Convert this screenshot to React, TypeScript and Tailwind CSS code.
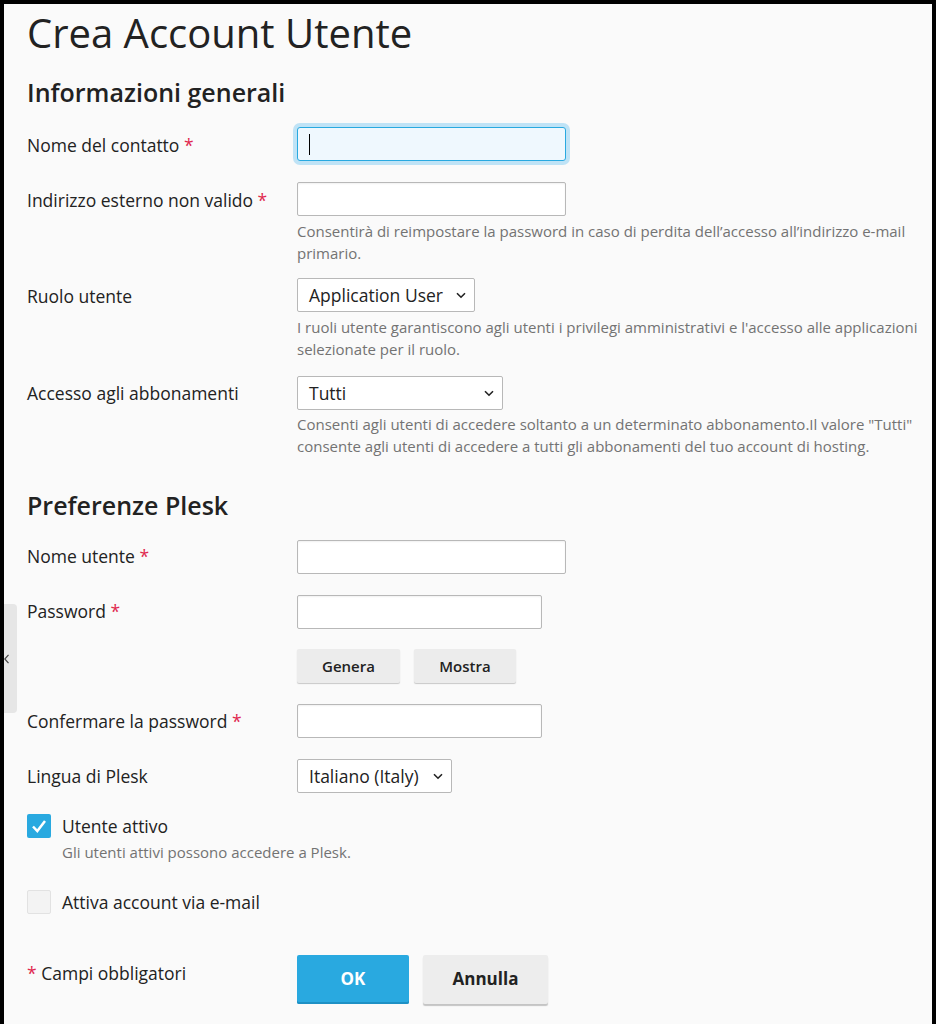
import React from "react";

// piccoli pezzi riusabili del form
function Req() {
  return <span className="text-[#e0284f]"> *</span>;
}

function Row({ label, required, className, pt, children }: { label: string; required?: boolean; className?: string; pt?: string; children: React.ReactNode }) {
  return (
    <div className={`flex ${className ?? ""}`}>
      <div className={`w-[270px] shrink-0 ${pt ?? "pt-[6px]"} text-[17.5px] leading-[24px] text-[#222]`}>
        {label}
        {required && <Req />}
      </div>
      <div className="w-[625px]">{children}</div>
    </div>
  );
}

function Hint({ children, className }: { children: React.ReactNode; className?: string }) {
  return <div className={`text-[15px] leading-[21.5px] text-[#737373] ${className ?? ""}`}>{children}</div>;
}

function TextBox({ w }: { w: string }) {
  return <div className={`${w} h-[34px] rounded-[2px] border border-[#b8b8b8] bg-white shadow-[inset_0_1px_2px_rgba(0,0,0,0.06)]`} />;
}

function Chevron() {
  return (
    <svg width="10" height="7" viewBox="0 0 10 7" className="shrink-0">
      <polyline points="1,1.2 5,5.2 9,1.2" fill="none" stroke="#222" strokeWidth="1.6" />
    </svg>
  );
}

function FakeSelect({ w, value }: { w: string; value: string }) {
  return (
    <div className={`${w} h-[34px] flex items-center justify-between pl-[11px] pr-[8px] rounded-[2px] border border-[#b8b8b8] bg-white text-[17.5px] text-[#222]`}>
      <span>{value}</span>
      <Chevron />
    </div>
  );
}

export default function App() {
  return (
    <div className="relative min-h-[1024px] border-x-4 border-t-4 border-black bg-[#fafafa] font-['Open_Sans',sans-serif] text-[#222]">
      {/* linguetta laterale */}
      <div className="absolute left-0 top-[600px] w-[13px] h-[109px] rounded-r-[4px] bg-[#e6e6e6]">
        <svg width="6" height="10" viewBox="0 0 6 10" className="absolute left-0 top-[50px]">
          <polyline points="4.5,0.8 0.8,5 4.5,9.2" fill="none" stroke="#444" strokeWidth="1.2" />
        </svg>
      </div>

      <div className="pl-[23px] pt-[5px]">
        <h1 className="text-[40px] leading-[48px] font-normal">Crea Account Utente</h1>

        <h2 className="mt-[19px] text-[25px] leading-[32px] font-semibold">Informazioni generali</h2>

        <Row label="Nome del contatto" required className="mt-[19px]">
          <div className="w-[269px] h-[34px] flex items-center pl-[11px] rounded-[3px] border border-[#29a9e0] bg-[#eff8fe] shadow-[0_0_0_4px_#bfe3f6]">
            <span className="w-px h-[21px] bg-black" />
          </div>
        </Row>

        <Row label="Indirizzo esterno non valido" required className="mt-[21px]">
          <TextBox w="w-[269px]" />
          <Hint className="mt-[5px]">
            Consentirà di reimpostare la password in caso di perdita dell’accesso all’indirizzo e-mail primario.
          </Hint>
        </Row>

        <Row label="Ruolo utente" className="mt-[14px]">
          <FakeSelect w="w-[178px]" value="Application User" />
          <Hint className="mt-[5px]">
            I ruoli utente garantiscono agli utenti i privilegi amministrativi e l'accesso alle applicazioni selezionate per il ruolo.
          </Hint>
        </Row>

        <Row label="Accesso agli abbonamenti" pt="pt-[5px]" className="mt-[16px]">
          <FakeSelect w="w-[206px]" value="Tutti" />
          <Hint className="mt-[4px]">
            Consenti agli utenti di accedere soltanto a un determinato abbonamento.Il valore "Tutti" consente agli utenti di accedere a tutti gli abbonamenti del tuo account di hosting.
          </Hint>
        </Row>

        <h2 className="mt-[32px] text-[25px] leading-[32px] font-semibold">Preferenze Plesk</h2>

        <Row label="Nome utente" required pt="pt-[4px]" className="mt-[19px]">
          <TextBox w="w-[269px]" />
        </Row>

        <Row label="Password" required pt="pt-[4px]" className="mt-[21px]">
          <TextBox w="w-[245px]" />
          <div className="mt-[20px] flex gap-[14px]">
            <button className="w-[103px] h-[34px] rounded-[2px] bg-[#ececec] shadow-[0_1px_1px_#c8c8c8] text-[15px] font-semibold text-[#222]">
              Genera
            </button>
            <button className="w-[102px] h-[34px] rounded-[2px] bg-[#ececec] shadow-[0_1px_1px_#c8c8c8] text-[15px] font-semibold text-[#222]">
              Mostra
            </button>
          </div>
        </Row>

        <Row label="Confermare la password" required pt="pt-[5px]" className="mt-[21px]">
          <TextBox w="w-[245px]" />
        </Row>

        <Row label="Lingua di Plesk" pt="pt-[5px]" className="mt-[21px]">
          <FakeSelect w="w-[155px]" value="Italiano (Italy)" />
        </Row>

        <div className="mt-[21px] flex items-center gap-[11px]">
          <div className="w-[24px] h-[24px] rounded-[2px] bg-[#29a9e0] flex items-center justify-center">
            <svg width="24" height="24" viewBox="0 0 24 24">
              <polyline points="6,12.5 10.3,17 18,7" fill="none" stroke="#fff" strokeWidth="2.5" />
            </svg>
          </div>
          <span className="text-[17.5px] leading-[24px]">Utente attivo</span>
        </div>
        <Hint className="mt-[4px] pl-[35px]">Gli utenti attivi possono accedere a Plesk.</Hint>

        <div className="mt-[26px] flex items-center gap-[11px]">
          <div className="w-[24px] h-[24px] rounded-[2px] border border-[#e2e2e2] bg-[#f3f3f3]" />
          <span className="text-[17.5px] leading-[24px]">Attiva account via e-mail</span>
        </div>

        <div className="mt-[41px] flex">
          <div className="w-[270px] shrink-0 pt-[6px] text-[17.5px] leading-[24px]">
            <span className="text-[#e0284f]">* </span>Campi obbligatori
          </div>
          <div className="flex gap-[14px]">
            <button className="w-[112px] h-[49px] rounded-[2px] bg-[#29a9e0] shadow-[inset_0_-2px_0_#1e90c4] text-[17px] font-bold text-white">
              OK
            </button>
            <button className="w-[125px] h-[49px] rounded-[2px] bg-[#ededed] shadow-[0_2px_1px_#c4c4c4] text-[17px] font-bold text-[#222]">
              Annulla
            </button>
          </div>
        </div>
      </div>
    </div>
  );
}
